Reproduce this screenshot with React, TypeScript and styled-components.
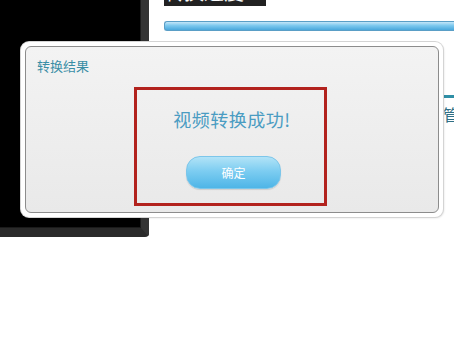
import React from 'react';
import styled, {createGlobalStyle} from 'styled-components';

const GlobalStyle = createGlobalStyle`
  html, body {
    margin: 0;
    padding: 0;
    background: #ffffff;
    font-family: "Noto Sans CJK SC", "Liberation Sans", sans-serif;
  }
`;

const Page = styled.div`
  position: relative;
  width: 454px;
  height: 351px;
  overflow: hidden;
  display: flex;
  align-items: flex-start;
  gap: 15px;
`;

const Preview = styled.div`
  width: 141px;
  height: 228px;
  background: #000;
  border-right: 8px solid #333;
  border-bottom: 9px solid #2a2a2a;
  border-bottom-right-radius: 4px;
  box-shadow: inset -1px -1px 0 #1a1a1a;
  flex-shrink: 0;
`;

const Side = styled.div`
  flex: 1;
  min-width: 0;
  display: flex;
  flex-direction: column;
`;

const StatusLabel = styled.span`
  align-self: flex-start;
  margin-top: -22px;
  padding-right: 16px;
  background: #222;
  color: #fff;
  font-size: 20px;
  line-height: 28px;
  white-space: nowrap;
`;

const ProgressBar = styled.div`
  margin-top: 15px;
  height: 8px;
  border: 1px solid #5a9ec6;
  border-right: none;
  border-radius: 3px 0 0 3px;
  background: linear-gradient(#c4e6f8 0%, #7cc8ee 45%, #4aa8dc 100%);
`;

const SectionHeader = styled.div`
  margin-top: 64px;
  height: 3px;
  background: #2f8fa6;
`;

const SectionText = styled.div`
  margin-top: 5px;
  margin-left: 279px;
  color: #2f6f86;
  font-size: 16px;
  line-height: 22px;
  white-space: nowrap;
`;

const DialogFrame = styled.div`
  position: absolute;
  left: 21px;
  top: 42px;
  width: 414px;
  height: 167px;
  padding: 4px;
  background: #fff;
  border-radius: 8px;
  box-shadow: 0 0 0 1px #d4d4d4, 1px 1px 2px rgba(0, 0, 0, 0.15);
`;

const Dialog = styled.div`
  position: relative;
  box-sizing: border-box;
  height: 100%;
  border: 1px solid #8c8c8c;
  border-radius: 6px;
  background: linear-gradient(#f3f3f3, #e9e9e9);
  display: flex;
  flex-direction: column;
  align-items: center;
`;

const Title = styled.div`
  align-self: flex-start;
  margin: 10px 0 0 11px;
  color: #3a8ea6;
  font-size: 13px;
  line-height: 18px;
`;

const Message = styled.div`
  margin-top: 32px;
  color: #4a9cc2;
  font-size: 18px;
  line-height: 24px;
  letter-spacing: 0.5px;
`;

const OkButton = styled.button`
  margin-top: 25px;
  margin-left: 3px;
  width: 95px;
  height: 33px;
  border: 1px solid #7cc6ea;
  border-radius: 14px;
  background: linear-gradient(#b2e3f7 0%, #7dcdf1 45%, #4eb5e7 100%);
  color: #fff;
  font-family: inherit;
  font-size: 12px;
  box-shadow: 0 1px 1px rgba(0, 0, 0, 0.12);
`;

const Highlight = styled.div`
  position: absolute;
  left: 134px;
  top: 87px;
  width: 187px;
  height: 113px;
  border: 3px solid #b2221d;
  pointer-events: none;
`;

const App = () => (
    <>
        <GlobalStyle/>
        <Page>
            <Preview/>
            <Side>
                <StatusLabel>转换进度:</StatusLabel>
                <ProgressBar/>
                <SectionHeader/>
                <SectionText>管理</SectionText>
            </Side>
            <DialogFrame>
                <Dialog>
                    <Title>转换结果</Title>
                    <Message>视频转换成功!</Message>
                    <OkButton>确定</OkButton>
                </Dialog>
            </DialogFrame>
            <Highlight/>
        </Page>
    </>
);

export default App;
